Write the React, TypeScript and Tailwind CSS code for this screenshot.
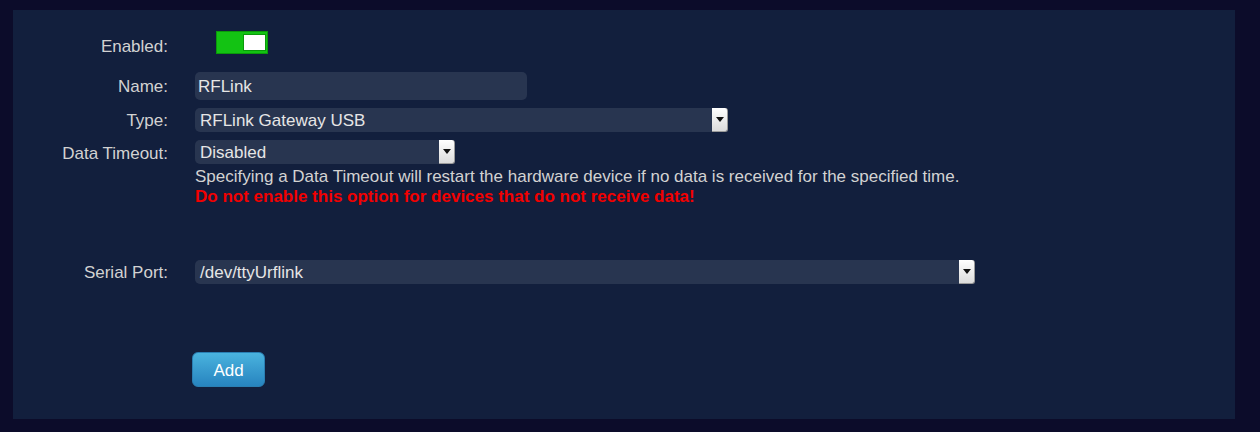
import React from 'react';

const font = { fontFamily: '"Liberation Sans", Arial, sans-serif' };

function SelectBox({ value, width }: { value: string; width: string }) {
  return (
    <div className={`flex h-[24px] ${width} items-stretch`}>
      <div className="flex flex-1 items-center rounded-l-[5px] bg-[#283550] pl-[5px] pt-[2px] text-[17px] text-[#e6e6e6]">
        {value}
      </div>
      <div className="flex w-[16px] items-center justify-center rounded-r-[3px] border-r border-b border-[#9a9a9a] bg-gradient-to-b from-[#ffffff] to-[#dcdcdc]">
        <svg width="8" height="5" viewBox="0 0 8 5">
          <path d="M0 0 L8 0 L4 5 Z" fill="#111" />
        </svg>
      </div>
    </div>
  );
}

function Label({ children }: { children: React.ReactNode }) {
  return <div className="w-[155px] shrink-0 pt-[2px] text-right text-[17px] leading-[24px] text-[#d2d2d2]">{children}</div>;
}

export default function App() {
  return (
    <div className="h-[432px] w-[1260px] bg-[#0c0c2a] px-[13px] pt-[10px]" style={font}>
      <div className="h-[409px] w-[1222px] bg-[#121f3d] pt-[21px] leading-[20px]">
        <div className="flex h-[23px] items-start gap-[48px]">
          <Label>
            <div className="mt-[2px]">Enabled:</div>
          </Label>
          <div className="flex h-[23px] w-[52px] items-center justify-end border border-[#0a9a0a] bg-[#13c313] pr-[1px]">
            <div className="h-[17px] w-[23px] border border-[#0a9a0a] bg-white" />
          </div>
        </div>

        <div className="mt-[18px] flex h-[28px] items-center gap-[27px]">
          <Label>Name:</Label>
          <div className="flex h-[28px] w-[332px] items-center rounded-[5px] bg-[#283550] pl-[3px] pt-[2px] text-[17px] text-[#e6e6e6]">
            RFLink
          </div>
        </div>

        <div className="mt-[8px] flex h-[24px] items-center gap-[27px]">
          <Label>Type:</Label>
          <SelectBox value="RFLink Gateway USB" width="w-[533px]" />
        </div>

        <div className="mt-[8px] flex items-start gap-[27px]">
          <Label>Data Timeout:</Label>
          <div>
            <SelectBox value="Disabled" width="w-[260px]" />
            <div className="mt-[3px] text-[17px] leading-[20px] text-[#d2d2d2]">
              Specifying a Data Timeout will restart the hardware device if no data is received for the specified time.
            </div>
            <div className="text-[17px] font-bold leading-[20px] text-[#f20000]">
              Do not enable this option for devices that do not receive data!
            </div>
          </div>
        </div>

        <div className="mt-[53px] flex h-[24px] items-center gap-[27px]">
          <Label>Serial Port:</Label>
          <SelectBox value="/dev/ttyUrflink" width="w-[780px]" />
        </div>

        <div className="mt-[68px] pl-[179px]">
          <button className="h-[35px] w-[73px] rounded-[6px] border border-[#2a7fb3] bg-gradient-to-b from-[#4ab3de] to-[#2784bf] pt-[2px] text-[17px] text-white">
            Add
          </button>
        </div>
      </div>
    </div>
  );
}
